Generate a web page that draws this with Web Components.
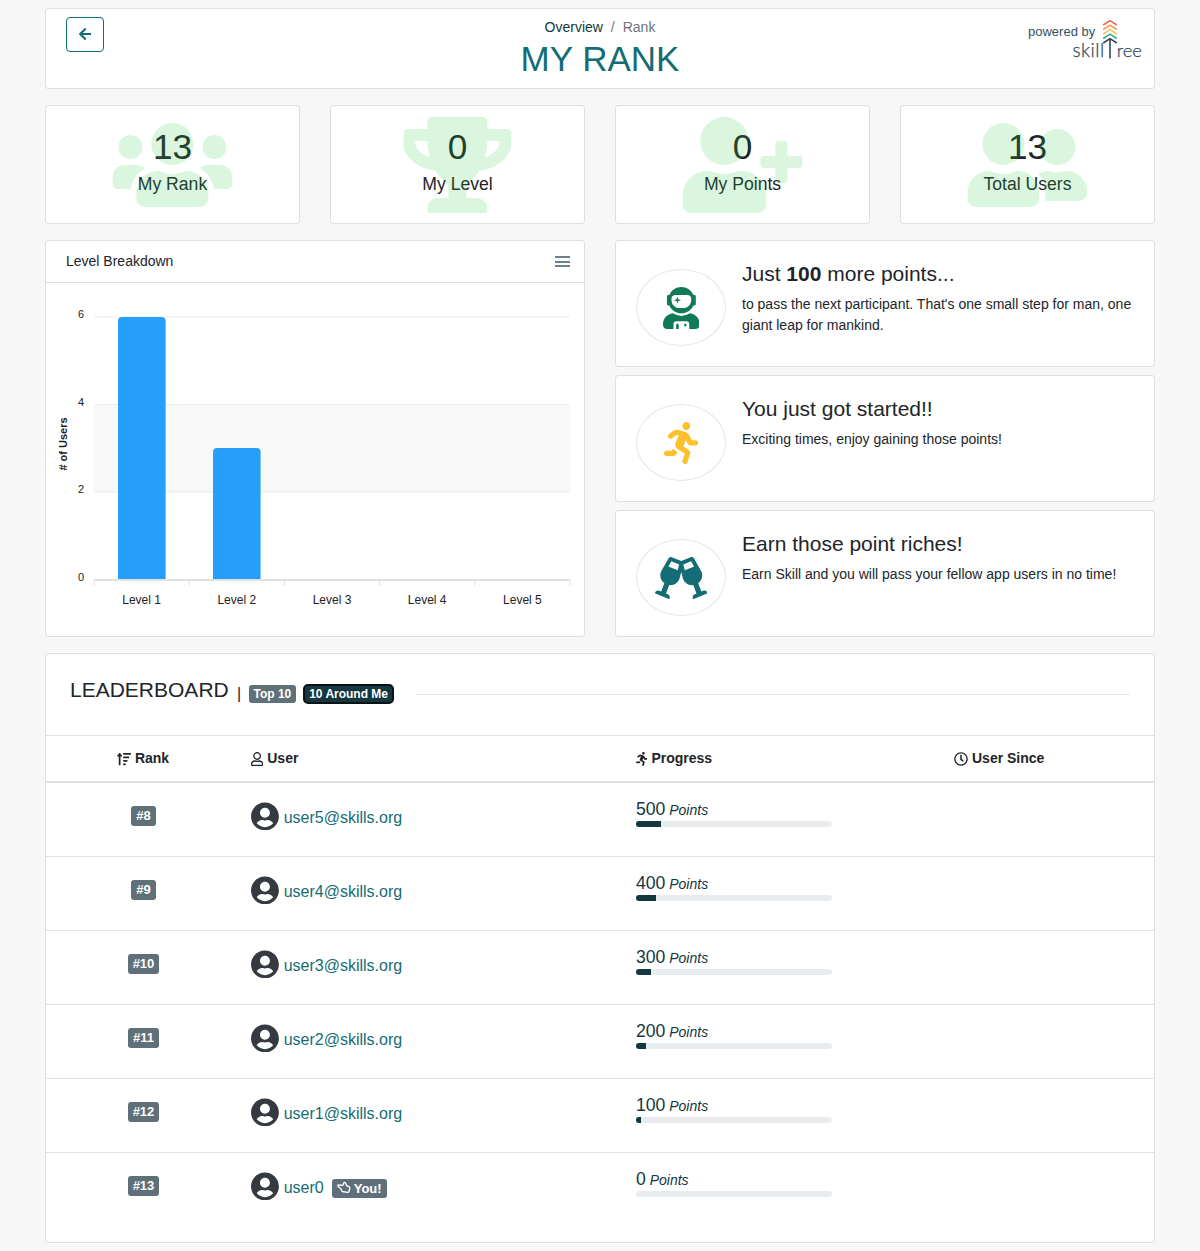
<!DOCTYPE html>
<html lang="en"><head><meta charset="utf-8"><title>My Rank</title>
<style>
html,body{margin:0;padding:0}
body{background:#f7f7f7;font:14px/21px "Liberation Sans",Arial,sans-serif;color:#212529}
</style></head><body>
<sk-page>
  <sk-header></sk-header>
  <sk-stats>
    <sk-stat icon="users" value="13" label="My Rank"></sk-stat>
    <sk-stat icon="trophy" value="0" label="My Level"></sk-stat>
    <sk-stat icon="userplus" value="0" label="My Points"></sk-stat>
    <sk-stat icon="friends" value="13" label="Total Users"></sk-stat>
  </sk-stats>
  <sk-middle>
    <sk-chart slot="chart"></sk-chart>
    <sk-tip slot="tips" icon="astronaut" color="#0f7a55"><span slot="title">Just <b>100</b> more points...</span>to pass the next participant. That's one small step for man, one giant leap for mankind.</sk-tip>
    <sk-tip slot="tips" icon="running" color="#ffc02d"><span slot="title">You just got started!!</span>Exciting times, enjoy gaining those points!</sk-tip>
    <sk-tip slot="tips" icon="cheers" color="#146c75"><span slot="title">Earn those point riches!</span>Earn Skill and you will pass your fellow app users in no time!</sk-tip>
  </sk-middle>
  <sk-leaderboard>
    <sk-row rank="#8" name="user5@skills.org" points="500" fill="25"></sk-row>
    <sk-row rank="#9" name="user4@skills.org" points="400" fill="20"></sk-row>
    <sk-row rank="#10" name="user3@skills.org" points="300" fill="15"></sk-row>
    <sk-row rank="#11" name="user2@skills.org" points="200" fill="10"></sk-row>
    <sk-row rank="#12" name="user1@skills.org" points="100" fill="5"></sk-row>
    <sk-row rank="#13" name="user0" points="0" fill="0" you last></sk-row>
  </sk-leaderboard>
</sk-page>
<script>
const ICONS={
users:[640,512,"M96 224c35.3 0 64-28.7 64-64s-28.7-64-64-64-64 28.7-64 64 28.7 64 64 64zm448 0c35.3 0 64-28.7 64-64s-28.7-64-64-64-64 28.7-64 64 28.7 64 64 64zm32 32h-64c-17.6 0-33.5 7.1-45.1 18.6 40.3 22.1 68.9 62 75.1 109.4h66c17.7 0 32-14.3 32-32v-32c0-35.3-28.7-64-64-64zm-256 0c61.9 0 112-50.1 112-112S381.9 32 320 32 208 82.1 208 144s50.1 112 112 112zm76.8 32h-8.3c-20.8 10-43.9 16-68.5 16s-47.6-6-68.5-16h-8.3C179.6 288 128 339.6 128 403.2V432c0 26.5 21.5 48 48 48h288c26.5 0 48-21.5 48-48v-28.8c0-63.6-51.6-115.2-115.2-115.2zm-223.7-13.4C161.5 263.1 145.6 256 128 256H64c-35.3 0-64 28.7-64 64v32c0 17.7 14.3 32 32 32h65.9c6.3-47.4 34.9-87.3 75.2-109.4z"],
trophy:[576,512,"M552 64H448V24c0-13.3-10.7-24-24-24H152c-13.3 0-24 10.7-24 24v40H24C10.7 64 0 74.7 0 88v56c0 35.7 22.5 72.4 61.9 100.7 31.5 22.7 69.8 37.1 110 41.7C203.3 338.5 240 360 240 360v72h-48c-35.3 0-64 20.7-64 56v12c0 6.6 5.4 12 12 12h296c6.6 0 12-5.4 12-12v-12c0-35.3-28.7-56-64-56h-48v-72s36.7-21.5 68.1-73.6c40.3-4.6 78.6-19 110-41.7 39.3-28.3 61.9-65 61.9-100.7V88c0-13.3-10.7-24-24-24zM99.3 192.8C74.9 175.2 64 155.6 64 144v-16h64.2c1 32.6 5.8 61.2 12.8 86.2-15.1-5.2-29.2-12.4-41.7-21.4zM512 144c0 16.1-17.7 36.1-35.3 48.8-12.5 9-26.7 16.2-41.8 21.4 7-25 11.8-53.6 12.8-86.2H512v16z"],
userplus:[640,512,"M624 208h-64v-64c0-8.8-7.2-16-16-16h-32c-8.8 0-16 7.2-16 16v64h-64c-8.8 0-16 7.2-16 16v32c0 8.8 7.2 16 16 16h64v64c0 8.8 7.2 16 16 16h32c8.8 0 16-7.2 16-16v-64h64c8.8 0 16-7.2 16-16v-32c0-8.8-7.2-16-16-16zm-400 48c70.7 0 128-57.3 128-128S294.7 0 224 0 96 57.3 96 128s57.3 128 128 128zm89.6 32h-16.7c-22.2 10.2-46.9 16-72.9 16s-50.6-5.8-72.9-16h-16.7C60.2 288 0 348.2 0 422.4V464c0 26.5 21.5 48 48 48h352c26.5 0 48-21.5 48-48v-41.6c0-74.2-60.2-134.4-134.4-134.4z"],
friends:[640,512,"M192 256c61.9 0 112-50.1 112-112S253.9 32 192 32 80 82.1 80 144s50.1 112 112 112zm76.8 32h-8.3c-20.8 10-43.9 16-68.5 16s-47.6-6-68.5-16h-8.3C51.6 288 0 339.6 0 403.2V432c0 26.5 21.5 48 48 48h288c26.5 0 48-21.5 48-48v-28.8c0-63.6-51.6-115.2-115.2-115.2zM480 256c53 0 96-43 96-96s-43-96-96-96-96 43-96 96 43 96 96 96zm48 32h-3.8c-13.9 4.8-28.6 8-44.2 8s-30.3-3.2-44.2-8H432c-20.4 0-39.2 5.9-55.7 15.4 24.4 26.3 39.7 61.2 39.7 99.8v38.4c0 2.2-.5 4.3-.6 6.4H592c26.5 0 48-21.5 48-48 0-61.9-50.1-112-112-112z"],
astronaut:[448,512,"M64 224h13.5c24.7 56.5 80.9 96 146.5 96s121.8-39.5 146.5-96H384c8.8 0 16-7.2 16-16v-96c0-8.8-7.2-16-16-16h-13.5C345.8 39.5 289.6 0 224 0S102.2 39.5 77.5 96H64c-8.8 0-16 7.2-16 16v96c0 8.8 7.2 16 16 16zm40-88c0-22.1 21.5-40 48-40h144c26.5 0 48 17.9 48 40v24c0 53-43 96-96 96h-48c-53 0-96-43-96-96v-24zM176 204l11-33 33-11-33-11-11-33-11 33-33 11 33 11zM327.6 321.4C297.7 340.7 262.2 352 224 352s-73.7-11.3-103.6-30.6C52.9 328.5 0 385 0 454.4v9.6c0 26.5 21.5 48 48 48h80v-64c0-17.7 14.3-32 32-32h128c17.7 0 32 14.3 32 32v64h80c26.5 0 48-21.5 48-48v-9.6c0-69.4-52.9-125.9-120.4-133zM272 448c-8.8 0-16 7.2-16 16s7.2 16 16 16 16-7.2 16-16-7.2-16-16-16zm-96 0c-8.8 0-16 7.2-16 16v48h32v-48c0-8.8-7.2-16-16-16z"],
running:[416,512,"M272 96c26.51 0 48-21.49 48-48S298.51 0 272 0s-48 21.49-48 48 21.49 48 48 48zM113.69 317.47l-14.8 34.52H32c-17.67 0-32 14.33-32 32s14.33 32 32 32h77.45c19.25 0 36.58-11.44 44.11-29.09l8.79-20.52-10.67-6.3c-17.32-10.23-30.06-25.37-37.99-42.61zM384 223.99h-44.03l-26.06-53.25c-12.5-25.55-35.45-44.23-61.78-50.94l-71.08-21.14c-28.3-6.8-57.77-.55-80.84 17.14l-39.67 30.41c-14.03 10.75-16.69 30.83-5.92 44.86s30.84 16.66 44.86 5.92l39.69-30.41c7.67-5.89 17.44-8 25.27-6.14l14.7 4.37-37.46 87.39c-12.62 29.48-1.31 64.01 26.3 80.31l84.98 50.17-27.47 87.73c-5.28 16.86 4.11 34.81 20.97 40.09 3.19 1 6.41 1.48 9.58 1.48 13.61 0 26.23-8.77 30.52-22.45l31.64-101.06c5.91-20.77-2.89-43.08-21.64-54.39l-61.24-36.14 31.31-78.28 20.27 41.43c8 16.34 24.92 26.89 43.11 26.89H384c17.67 0 32-14.33 32-32s-14.33-31.99-32-31.99z"],
cheers:[640,512,"M639.4 433.6c-8.4-20.4-31.8-30.1-52.2-21.6l-22.1 9.2-38.7-101.9c47.9-35 64.8-100.3 34.5-152.8L474.3 16c-8-13.9-25.1-19.7-40-13.6L320 49.8 205.7 2.4c-14.9-6.2-32-.3-40 13.6L79.1 166.5C48.9 219 65.7 284.3 113.6 319.2l-38.6 102-22.1-9.2c-20.4-8.5-43.7 1.2-52.2 21.6-1.7 4.1.2 8.8 4.3 10.5l162.3 67.4c4.1 1.7 8.7-.2 10.4-4.3 8.4-20.4-1.2-43.8-21.6-52.3l-22.1-9.2L173.3 342c4.4.5 8.8 1.3 13.1 1.3 51.7 0 99.4-33.1 113.4-85.3l20.2-75.4 20.2 75.4c14 52.2 61.7 85.3 113.4 85.3 4.3 0 8.7-.8 13.1-1.3L506 445.6l-22.1 9.2c-20.4 8.5-30.1 31.9-21.6 52.3 1.7 4.1 6.4 6 10.4 4.3L635.1 444c4.1-1.7 6-6.4 4.3-10.4zM275.9 162.1l-112.1-46.5 36.5-63.4 94.5 39.2-18.9 70.7zm88.2 0l-18.9-70.7 94.5-39.2 36.5 63.4-112.1 46.5z"],
back:[448,512,"M257.5 445.1l-22.2 22.2c-9.4 9.4-24.6 9.4-33.9 0L7 273c-9.4-9.4-9.4-24.6 0-33.9L201.4 44.7c9.4-9.4 24.6-9.4 33.9 0l22.2 22.2c9.5 9.5 9.3 25-.4 34.3L136.6 216H424c13.3 0 24 10.7 24 24v32c0 13.3-10.7 24-24 24H136.6l120.5 114.8c9.8 9.3 10 24.8.4 34.3z"],
sort:[512,512,"M304 416h-64a16 16 0 0 0-16 16v32a16 16 0 0 0 16 16h64a16 16 0 0 0 16-16v-32a16 16 0 0 0-16-16zM16 160h48v304a16 16 0 0 0 16 16h32a16 16 0 0 0 16-16V160h48c14.21 0 21.38-17.24 11.31-27.31l-80-96a16 16 0 0 0-22.62 0l-80 96C-5.35 142.74 1.77 160 16 160zm416 0H240a16 16 0 0 0-16 16v32a16 16 0 0 0 16 16h192a16 16 0 0 0 16-16v-32a16 16 0 0 0-16-16zm-64 128H240a16 16 0 0 0-16 16v32a16 16 0 0 0 16 16h128a16 16 0 0 0 16-16v-32a16 16 0 0 0-16-16zM496 32H240a16 16 0 0 0-16 16v32a16 16 0 0 0 16 16h256a16 16 0 0 0 16-16V48a16 16 0 0 0-16-16z"],
user:[448,512,"M313.6 304c-28.7 0-42.5 16-89.6 16-47.1 0-60.8-16-89.6-16C60.2 304 0 364.2 0 438.4V464c0 26.5 21.5 48 48 48h352c26.5 0 48-21.5 48-48v-25.6c0-74.2-60.2-134.4-134.4-134.4zM400 464H48v-25.6c0-47.6 38.8-86.4 86.4-86.4 14.6 0 38.3 16 89.6 16 51.7 0 74.9-16 89.6-16 47.6 0 86.4 38.8 86.4 86.4V464zM224 288c79.5 0 144-64.5 144-144S303.5 0 224 0 80 64.5 80 144s64.5 144 144 144zm0-240c52.9 0 96 43.1 96 96s-43.1 96-96 96-96-43.1-96-96 43.1-96 96-96z"],
clock:[512,512,"M256 8C119 8 8 119 8 256s111 248 248 248 248-111 248-248S393 8 256 8zm0 448c-110.5 0-200-89.5-200-200S145.5 56 256 56s200 89.5 200 200-89.5 200-200 200zm61.8-104.4l-84.9-61.7c-3.1-2.3-4.9-5.9-4.9-9.7V116c0-6.6 5.4-12 12-12h32c6.6 0 12 5.4 12 12v141.7l66.8 48.6c5.4 3.9 6.5 11.4 2.6 16.8L334.6 349c-3.9 5.3-11.4 6.5-16.8 2.6z"],
avatar:[496,512,"M248 8C111 8 0 119 0 256s111 248 248 248 248-111 248-248S385 8 248 8zm0 96c48.6 0 88 39.4 88 88s-39.4 88-88 88-88-39.4-88-88 39.4-88 88-88zm0 344c-58.7 0-111.3-26.6-146.5-68.2 18.8-35.4 55.6-59.8 98.5-59.8 2.4 0 4.8.4 7.1 1.1 13 4.2 26.6 6.9 40.9 6.9 14.3 0 28-2.7 40.9-6.9 2.3-.7 4.7-1.1 7.1-1.1 42.9 0 79.7 24.4 98.5 59.8C359.3 421.4 306.7 448 248 448z"]
};
const svg=(n,h,fill='currentColor')=>{const[w,vh,d]=ICONS[n];return `<svg xmlns="http://www.w3.org/2000/svg" viewBox="0 0 ${w} ${vh}" width="${w/vh*h}" height="${h}" fill="${fill}" style="display:block;flex:none"><path d="${d}"/></svg>`};
const BORDER='rgba(0,0,0,.125)';
function def(name,render){customElements.define(name,class extends HTMLElement{constructor(){super();this.attachShadow({mode:'open'})}connectedCallback(){this.shadowRoot.innerHTML=render(this)}})}

def('sk-page',()=>`<style>:host{display:flex;flex-direction:column;gap:16px;padding:8px 45px}</style><slot></slot>`);

def('sk-header',()=>`<style>
:host{display:grid;grid-template-columns:1fr auto 1fr;background:#fff;border:1px solid ${BORDER};border-radius:4px;padding:8px 20px;height:63px}
.back{width:38px;height:35px;box-sizing:border-box;border:1px solid #146c75;border-radius:4px;padding-bottom:1px;display:flex;align-items:center;justify-content:center;color:#146c75}
.mid{text-align:center}
.crumb{font-size:14px;line-height:21px;color:#143740}
.crumb i{font-style:normal;color:#6c757d;padding:0 8px 0 4px}
.crumb span{color:#6c757d}
h1{margin:0;font-size:35px;line-height:42px;font-weight:400;color:#146c75}
.logo{justify-self:end;position:relative;width:114px;height:42px;margin:3px -8px 0 0}
.pb{font-size:13px;line-height:15px;padding-top:4px;color:#36505f}
.word{display:flex;justify-content:flex-end;font-family:Lato,"Liberation Sans",sans-serif;font-weight:300;font-size:19px;line-height:22px;color:#2f4858;-webkit-text-stroke:.25px #2f4858}
.word span:first-child{letter-spacing:.5px}
.word span:last-child{font-size:18.5px}
.word b{font-weight:inherit;width:12px}
svg.mark{position:absolute;left:70px;top:-1px}
</style>
<div class="back">${svg('back',14)}</div>
<div class="mid"><div class="crumb">Overview <i>/</i><span>Rank</span></div><h1>MY RANK</h1></div>
<div class="logo"><div class="pb">powered by</div><div class="word"><span>skill</span><b></b><span>ree</span></div>
<svg class="mark" width="24" height="42" viewBox="0 0 24 42" fill="none" stroke-width="1.6">
<path d="M5.2 6 12 1.6 18.8 6" stroke="#e8694e"/><path d="M5.2 10.5 12 6.1 18.8 10.5" stroke="#f29a55"/><path d="M5.2 15 12 10.6 18.8 15" stroke="#f6bf62"/><path d="M5.2 19.5 12 15.1 18.8 19.5" stroke="#3aa692"/>
<path d="M5.2 24 12 19.6 18.8 24M12 19.6V39.5" stroke="#2f4858"/></svg></div>`);

def('sk-stats',()=>`<style>:host{display:grid;grid-template-columns:repeat(4,255px);gap:30px}</style><slot></slot>`);

def('sk-stat',e=>`<style>
:host{display:block;position:relative;background:#fff;border:1px solid ${BORDER};border-radius:4px;height:117px;text-align:center;overflow:hidden}
.v{font-size:35.2px;line-height:44px;padding-top:19px}
.l{font-size:17.6px;line-height:27px;padding-top:2px}
.i{position:absolute;inset:11px 1px auto 0;display:flex;justify-content:center;opacity:.17;color:#2ecc40;transform:translateX(.4px)}
</style><div class="v">${e.getAttribute('value')}</div><div class="l">${e.getAttribute('label')}</div><div class="i">${svg(e.getAttribute('icon'),96)}</div>`);

def('sk-middle',()=>`<style>:host{display:grid;grid-template-columns:540px 540px;gap:30px;height:397px}
.t{display:flex;flex-direction:column;gap:8px}</style><slot name="chart"></slot><div class="t"><slot name="tips"></slot></div>`);

def('sk-chart',()=>{
 const labels=['Level 1','Level 2','Level 3','Level 4','Level 5'];
 const step=95.2;
 let ticks='',txt='';
 for(let i=0;i<=5;i++){const x=48+i*step;ticks+=`<line x1="${x}" x2="${x}" y1="298" y2="303.5" stroke="#e0e0e0"/>`}
 labels.forEach((l,i)=>{txt+=`<text x="${48+step*(i+.5)}" y="322" text-anchor="middle" font-size="12" fill="#222">${l}</text>`});
 const ys=[[6,35,35.5],[4,122.5,124],[2,210,210.5],[0,297.5,299]];
 let g='',yl='';
 ys.forEach(([v,y,t])=>{if(v)g+=`<line x1="48" x2="524" y1="${y}" y2="${y}" stroke="#ebebeb"/>`;yl+=`<text x="38" y="${t}" text-anchor="end" font-size="11" fill="#222">${v}</text>`});
 return `<style>
:host{display:block;background:#fff;border:1px solid ${BORDER};border-radius:4px;overflow:hidden}
.h{height:41px;border-bottom:1px solid ${BORDER};display:flex;align-items:center;justify-content:space-between;padding:0 14px 0 20px;font-size:14px}
.m{width:15px;height:11px;display:flex;flex-direction:column;justify-content:space-between}
.m i{display:block;height:2px;background:#6e8192}
svg{display:block}
text{font-family:"Liberation Sans",Arial,sans-serif}
</style><div class="h"><span>Level Breakdown</span><div class="m"><i></i><i></i><i></i></div></div>
<svg width="538" height="354" viewBox="0 0 538 354" style="margin-top:-1px">
<rect x="48" y="122.5" width="476" height="87.5" fill="#f8f8f8"/>${g}
<path d="M72 298V39a4 4 0 0 1 4-4h39.6a4 4 0 0 1 4 4V298z" fill="#269ffb"/>
<path d="M167 298V170a4 4 0 0 1 4-4h39.6a4 4 0 0 1 4 4V298z" fill="#269ffb"/>
<line x1="48" x2="524" y1="298" y2="298" stroke="#e0e0e0" stroke-width="2"/>${ticks}${txt}${yl}
<text transform="translate(21,162) rotate(-90)" text-anchor="middle" font-size="11" font-weight="700" fill="#222"># of Users</text>
</svg>`});

def('sk-tip',e=>`<style>
:host{display:flex;flex:1;gap:16px;background:#fff;border:1px solid ${BORDER};border-radius:4px;padding:20px 20px 0 20px;box-sizing:border-box;align-items:flex-start}
.c{flex:none;width:90px;height:77px;box-sizing:border-box;margin-top:8px;border:1px solid #e3e5e7;border-radius:50%;display:flex;align-items:center;justify-content:center;color:${e.getAttribute('color')}}
.t{font-size:21px;line-height:26px;margin-bottom:7px}
.b{font-size:14px;line-height:21px}
</style><div class="c">${svg(e.getAttribute('icon'),42)}</div><div><div class="t"><slot name="title"></slot></div><div class="b"><slot></slot></div></div>`);

def('sk-leaderboard',()=>`<style>
:host{display:block;background:#fff;border:1px solid ${BORDER};border-radius:4px;padding-bottom:15px}
.top{height:82px;box-sizing:border-box;padding:0 24px 1px;display:flex;align-items:center;border-bottom:1px solid #dee2e6}
h2{margin:0 8px 0 0;font-size:21px;font-weight:400;line-height:26px;position:relative;top:-4px}
.sep{font-size:16px;margin:0 8px 2px .3px;color:#212529}
.b{font-size:12px;font-weight:700;line-height:12px;color:#fff;background:#607078;padding:3px 4.3px;border-radius:3px}
.on{background:#143740;border:2px solid #0b1114;border-radius:5px;margin-left:7.6px;padding:2px 4px}
.ln{flex:1;height:1px;background:#e5e5e5;margin-left:22px}
.head{display:grid;grid-template-columns:195px 385px 318px 1fr;height:45px;align-items:center;border-bottom:2px solid #dee2e6;font-weight:700;font-size:14px;color:#212529}
.head div{display:flex;align-items:center;gap:4px;padding-left:10px}
.head div:first-child{justify-content:center;padding:0 1px 0 0}
</style>
<div class="top"><h2>LEADERBOARD</h2><span class="sep">|</span><span class="b">Top 10</span><span class="b on">10 Around Me</span><div class="ln"></div></div>
<div class="head"><div>${svg('sort',14)}Rank</div><div>${svg('user',14)}User</div><div>${svg('running',14)}Progress</div><div>${svg('clock',14)}User Since</div></div>
<slot></slot>`);

def('sk-row',e=>{
 const you=e.hasAttribute('you');
 return `<style>
:host{display:grid;grid-template-columns:195px 385px 318px 1fr;height:74px;box-sizing:border-box;${e.hasAttribute('last')?'':'border-bottom:1px solid #dee2e6;'}}
.r{text-align:center;padding-top:23px}
.b{display:inline-block;background:#607078;color:#fff;font-weight:700;font-size:13px;line-height:20px;height:20px;padding:0 5px;border-radius:3px;vertical-align:top}
.u{display:flex;align-items:center;padding:19px 0 0 10.3px;height:28px;gap:4.5px;color:#343a40}
a{color:#146c75;font-size:16px;text-decoration:none;position:relative;top:1px}
.y{display:inline-flex;align-items:center;gap:3px;margin-left:3.5px;position:relative;top:2px;background:#607078;color:#fff;font-weight:700;font-size:13px;line-height:19px;height:19px;padding:0 5px;border-radius:3px}
.y svg{display:block}
.p{padding:15px 0 0 10px;color:#143740}
.n{font-size:17.6px;line-height:22px}
.n i{font-size:14px;margin-left:-1px}
.bar{width:196px;height:6px;background:#e9ecef;border-radius:3px;overflow:hidden}
.bar div{height:6px;background:#143740;width:${e.getAttribute('fill')}px}
</style>
<div class="r"><span class="b">${e.getAttribute('rank')}</span></div>
<div class="u">${svg('avatar',28.8)}<a>${e.getAttribute('name')}</a>${you?`<span class="y"><svg width="14" height="14" viewBox="0 0 16 16" fill="none" stroke="#fff" stroke-width="1.5" stroke-linejoin="round"><path d="M1.3 4.6 6.8 5 7.6 2.2c.2-.8 1.6-.6 2 .2L11 5.2l2.6 1.2c.9.4 1.2 1.2 1 2.1l-.8 3.2c-.2.8-.9 1.3-1.7 1.2L7 12.3c-.8-.1-1.3-.5-1.6-1.2L4.4 8.8 1.8 6.8c-.9-.6-.9-2.2-.5-2.2z"/></svg>You!</span>`:''}</div>
<div class="p"><div class="n">${e.getAttribute('points')} <i>Points</i></div><div class="bar"><div></div></div></div><div></div>`});
</script>
</body></html>
